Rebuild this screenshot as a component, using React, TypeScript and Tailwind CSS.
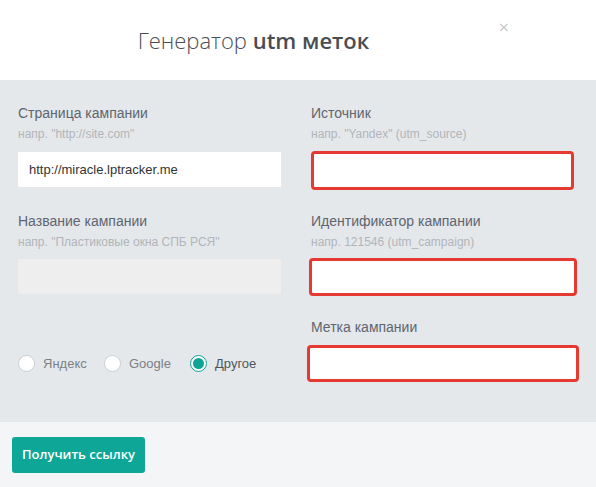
import React from "react";

const arial = { fontFamily: '"Liberation Sans", Arial, sans-serif' };

function Label({ title, hint }: { title: string; hint?: string }) {
  return (
    <div className="flex flex-col">
      <div className="text-[14px] leading-[16px] text-[#5d6570]" style={arial}>{title}</div>
      {hint && (
        <div className="mt-[6px] text-[12px] leading-[14px] text-[#b1b5ba]" style={arial}>{hint}</div>
      )}
    </div>
  );
}

function Radio({ label, checked }: { label: string; checked?: boolean }) {
  return (
    <div className="flex items-center gap-[8px]">
      <div
        className={
          checked
            ? "w-[17px] h-[17px] rounded-full bg-white border-[1.5px] border-[#0fa596] flex items-center justify-center"
            : "w-[17px] h-[17px] rounded-full bg-white border border-[#c9cdd1]"
        }
      >
        {checked && <div className="w-[11px] h-[11px] rounded-full bg-[#0fa596]" />}
      </div>
      <span
        className={checked ? "text-[13px] text-[#50555c]" : "text-[13px] text-[#7c8086]"}
        style={arial}
      >
        {label}
      </span>
    </div>
  );
}

export default function App() {
  return (
    <div className="w-[596px] h-[487px] bg-white flex flex-col overflow-hidden">
      <div className="relative h-[80px] bg-white flex items-center justify-center pr-[89px]">
        <div
          className="text-[22px] leading-[30px] text-[#4a4d52] -mt-[1px]"
          style={{ fontFamily: '"Open Sans", sans-serif' }}
        >
          <span className="font-light">Генератор </span>
          <span className="font-semibold">utm меток</span>
        </div>
        <span
          className="absolute left-[498px] top-[20px] text-[14px] leading-[14px] text-[#c4c6c9]"
          style={{ fontFamily: '"DejaVu Sans", sans-serif' }}
        >
          ×
        </span>
      </div>

      <div className="h-[342px] bg-[#e5e8eb] pl-[18px] pt-[25px] grid grid-cols-[263px_263px] gap-x-[30px]">
        <div className="flex flex-col">
          <Label title="Страница кампании" hint={'напр. "http://site.com"'} />
          <div
            className="mt-[11px] h-[35px] bg-white flex items-center pl-[11px] text-[13px] text-[#333]"
            style={arial}
          >
            http://miracle.lptracker.me
          </div>
          <div className="mt-[26px]">
            <Label title="Название кампании" hint={'напр. "Пластиковые окна СПБ РСЯ"'} />
          </div>
          <div className="mt-[10px] h-[35px] bg-[#eeeeee]" />
          <div className="mt-[60px] flex items-center">
            <div className="w-[86px]"><Radio label="Яндекс" /></div>
            <div className="w-[86px]"><Radio label="Google" /></div>
            <Radio label="Другое" checked />
          </div>
        </div>

        <div className="flex flex-col">
          <Label title="Источник" hint={'напр. "Yandex" (utm_source)'} />
          <div className="mt-[10px] h-[39px] w-[263px] bg-white border-[3px] border-[#e53a32] rounded-[4px]" />
          <div className="mt-[23px]">
            <Label title="Идентификатор кампании" hint="напр. 121546 (utm_campaign)" />
          </div>
          <div className="mt-[9px] -ml-[2px] h-[38px] w-[268px] bg-white border-[3px] border-[#e53a32] rounded-[4px]" />
          <div className="mt-[23px]">
            <Label title="Метка кампании" />
          </div>
          <div className="mt-[10px] -ml-[4px] h-[37px] w-[272px] bg-white border-[3px] border-[#e53a32] rounded-[4px]" />
        </div>
      </div>

      <div className="flex-1 bg-[#f4f5f7] pl-[12px] pt-[15px]">
        <button
          className="h-[36px] w-[133px] rounded-[3px] bg-[#0ea697] text-white text-[13px] font-semibold"
          style={{ fontFamily: '"Open Sans", sans-serif' }}
        >
          Получить ссылку
        </button>
      </div>
    </div>
  );
}
